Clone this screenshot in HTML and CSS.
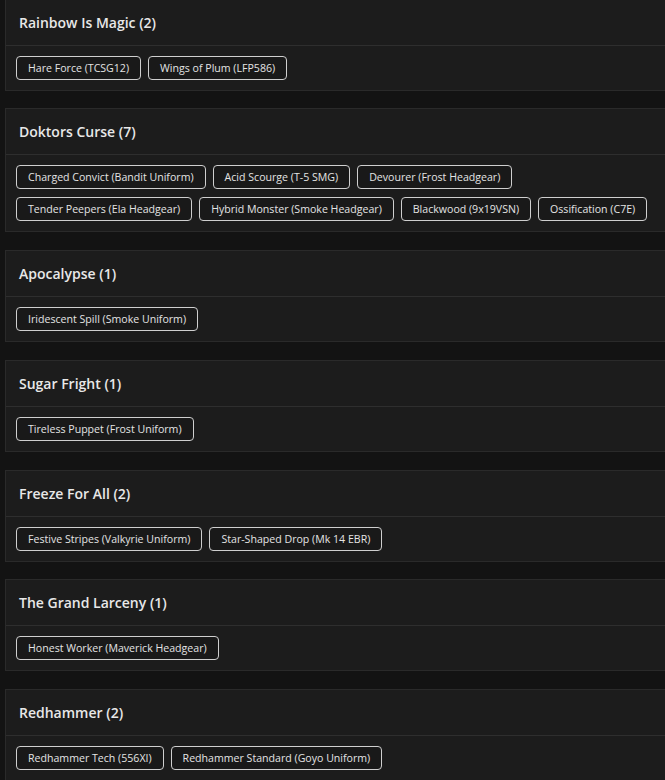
FILE: index.html
```html
<!DOCTYPE html>
<html lang="en">
<head>
  <meta charset="UTF-8" />
  <title>Collections</title>
  <link rel="stylesheet" href="styles.css">
</head>
<body>
  <div class="list">
    <div class="card">
      <div class="card-head">Rainbow Is Magic (2)</div>
      <div class="card-body">
        <span class="chip">Hare Force (TCSG12)</span>
        <span class="chip">Wings of Plum (LFP586)</span>
      </div>
    </div>

    <div class="card">
      <div class="card-head">Doktors Curse (7)</div>
      <div class="card-body">
        <span class="chip">Charged Convict (Bandit Uniform)</span>
        <span class="chip">Acid Scourge (T-5 SMG)</span>
        <span class="chip">Devourer (Frost Headgear)</span>
        <span class="chip">Tender Peepers (Ela Headgear)</span>
        <span class="chip">Hybrid Monster (Smoke Headgear)</span>
        <span class="chip">Blackwood (9x19VSN)</span>
        <span class="chip">Ossification (C7E)</span>
      </div>
    </div>

    <div class="card">
      <div class="card-head">Apocalypse (1)</div>
      <div class="card-body">
        <span class="chip">Iridescent Spill (Smoke Uniform)</span>
      </div>
    </div>

    <div class="card">
      <div class="card-head">Sugar Fright (1)</div>
      <div class="card-body">
        <span class="chip">Tireless Puppet (Frost Uniform)</span>
      </div>
    </div>

    <div class="card">
      <div class="card-head">Freeze For All (2)</div>
      <div class="card-body">
        <span class="chip">Festive Stripes (Valkyrie Uniform)</span>
        <span class="chip">Star-Shaped Drop (Mk 14 EBR)</span>
      </div>
    </div>

    <div class="card">
      <div class="card-head">The Grand Larceny (1)</div>
      <div class="card-body">
        <span class="chip">Honest Worker (Maverick Headgear)</span>
      </div>
    </div>

    <div class="card">
      <div class="card-head">Redhammer (2)</div>
      <div class="card-body">
        <span class="chip">Redhammer Tech (556XI)</span>
        <span class="chip">Redhammer Standard (Goyo Uniform)</span>
      </div>
    </div>
  </div>
</body>
</html>
```

FILE: styles.css
```css
* {
  margin: 0;
  padding: 0;
  box-sizing: border-box;
}

html, body {
  width: 100%;
  min-height: 100vh;
  overflow: hidden;
  font-family: 'Open Sans', sans-serif;
  background: #131313;
  color: #e4e4e4;
}

.list {
  display: flex;
  flex-direction: column;
  gap: 17.75px;
  margin-top: -1.5px;
  margin-left: 5px;
  margin-right: -15px;
}

.card {
  background: #1c1c1c;
  border: 1px solid #2a2a2a;
}

.card-head {
  height: 46px;
  padding: 0 13px;
  display: flex;
  align-items: center;
  font-size: 14px;
  font-weight: 600;
  color: #e8e8e8;
  border-bottom: 1px solid #2e2e2e;
}

.card-body {
  display: flex;
  flex-wrap: wrap;
  gap: 8px 7px;
  padding: 10px 10px;
}

.chip {
  display: inline-block;
  height: 24px;
  line-height: 22px;
  padding: 0 11px;
  font-size: 10.6px;
  color: #e4e4e4;
  border: 1px solid #cfcfcf;
  border-radius: 4px;
  background: #191919;
}
```
